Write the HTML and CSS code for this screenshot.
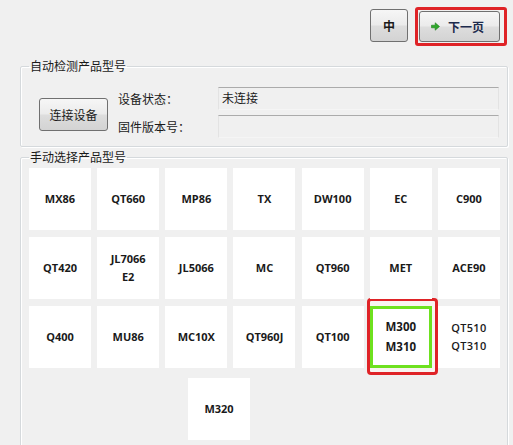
FILE: index.html
```html
<!DOCTYPE html>
<html lang="zh">
<head>
<meta charset="utf-8">
<title>产品型号选择</title>
<link rel="stylesheet" href="styles.css">
</head>
<body>
<div class="topbar">
  <button class="btn btn-lang">中</button>
  <div class="hl-frame">
    <button class="btn btn-next">
      <svg class="arrow" width="9" height="9" viewBox="0 0 9 9"><path d="M0.5 3.2 H4.2 V0.8 L8.5 4.5 L4.2 8.2 V5.8 H0.5 Z" fill="#2fa82a" stroke="#1d7f1d" stroke-width="0.6"/></svg>
      <span>下一页</span>
    </button>
  </div>
</div>

<fieldset class="group group-auto">
  <legend>自动检测产品型号</legend>
  <div class="auto-row">
    <button class="btn btn-connect">连接设备</button>
    <div class="fields">
      <span class="label">设备状态：</span>
      <div class="textbox">未连接</div>
      <span class="label">固件版本号：</span>
      <div class="textbox"></div>
    </div>
  </div>
</fieldset>

<fieldset class="group group-manual">
  <legend>手动选择产品型号</legend>
  <div class="tiles">
    <div class="tile">MX86</div>
    <div class="tile">QT660</div>
    <div class="tile">MP86</div>
    <div class="tile">TX</div>
    <div class="tile">DW100</div>
    <div class="tile">EC</div>
    <div class="tile">C900</div>
    <div class="tile">QT420</div>
    <div class="tile two">JL7066<br>E2</div>
    <div class="tile">JL5066</div>
    <div class="tile">MC</div>
    <div class="tile">QT960</div>
    <div class="tile">MET</div>
    <div class="tile">ACE90</div>
    <div class="tile">Q400</div>
    <div class="tile">MU86</div>
    <div class="tile">MC10X</div>
    <div class="tile">QT960J</div>
    <div class="tile">QT100</div>
    <div class="tile two selected">M300<br>M310</div>
    <div class="tile two light">QT510<br>QT310</div>
  </div>
  <div class="tiles-last">
    <div class="tile">M320</div>
  </div>
</fieldset>
</body>
</html>
```

FILE: styles.css
```css
html {
  overflow: hidden;
}
body {
  margin: 0;
  width: 513px;
  height: 445px;
  background: #f0f0f0;
  font-family: "Noto Sans CJK SC", "Noto Sans", sans-serif;
  font-size: 12px;
  color: #1a1a1a;
  overflow: hidden;
}

.topbar {
  display: flex;
  justify-content: flex-end;
  align-items: flex-start;
  padding: 7px 6px 0 0;
  height: 38px;
}

.btn {
  font-family: "Noto Sans CJK SC", sans-serif;
  background: linear-gradient(#f6f6f6 0%, #ebebeb 48%, #dddddd 52%, #d3d3d3 100%);
  border: 1px solid #707070;
  border-radius: 3px;
  color: #1a1a1a;
  padding: 0;
  margin: 0;
}

.btn-lang {
  width: 38px;
  height: 33px;
  margin-top: 2px;
  font-size: 12px;
  font-weight: bold;
}

.hl-frame {
  margin-left: 7px;
  border: 3px solid #df2327;
  border-radius: 3px;
  padding: 1px 4px 0 1px;
  height: 32px;
}

.btn-next {
  width: 81px;
  height: 31px;
  display: flex;
  align-items: center;
  justify-content: center;
  gap: 8px;
  padding-right: 4px;
  font-size: 12px;
  font-weight: bold;
  color: #1d2b4d;
}

.arrow {
  display: block;
}

.group {
  margin: 0 5px 0 20px;
  border: 1px solid #d5d9dc;
  box-shadow: inset 1px 1px 0 #ffffff, 1px 1px 0 #ffffff;
  border-radius: 2px;
  padding: 0 7px 0 8px;
}

.group legend {
  padding: 0 1px;
  margin-left: 0;
  font-size: 12px;
  line-height: 16px;
  color: #1a1a1a;
}

.group-auto {
  margin-top: 13px;
  padding-top: 13px;
  padding-bottom: 8px;
}

.auto-row {
  display: flex;
  align-items: flex-start;
}

.btn-connect {
  width: 69px;
  height: 33px;
  margin: 11px 0 0 10px;
  font-size: 12px;
}

.fields {
  margin-left: 10px;
  display: grid;
  grid-template-columns: 100px 281px;
  row-gap: 5px;
  align-items: center;
}

.label {
  font-size: 12px;
  line-height: 16px;
}

.textbox {
  height: 23px;
  box-sizing: border-box;
  border: 1px solid #e3e3e3;
  border-top-color: #ababab;
  border-bottom-color: #f5f5f5;
  background: #f0f0f0;
  padding: 2px 3px;
  font-size: 12px;
  line-height: 16px;
}

.group-manual {
  margin-top: 2px;
  padding-top: 3px;
  height: 300px;
}

.tiles {
  display: grid;
  grid-template-columns: repeat(7, 62px);
  grid-auto-rows: 62px;
  column-gap: 6.17px;
  row-gap: 7px;
}

.tile {
  position: relative;
  width: 62px;
  height: 62px;
  box-sizing: border-box;
  background: #ffffff;
  display: flex;
  align-items: center;
  justify-content: center;
  text-align: center;
  font-family: "Open Sans", "Noto Sans", sans-serif;
  font-weight: bold;
  font-size: 11px;
  line-height: 18px;
  color: #1a1a1a;
}

.tile.selected {
  border: 3px solid #6ee11f;
  line-height: 20px;
  font-size: 11.5px;
}

.tile.selected::before {
  content: "";
  position: absolute;
  left: -6px;
  top: -11px;
  right: -9px;
  bottom: -10px;
  border: 3px solid #df2327;
  border-radius: 4px;
  background: #f8f4f1;
  z-index: -1;
}

.tile.light {
  font-weight: 600;
  letter-spacing: 0.3px;
}

.tiles-last {
  display: flex;
  margin-top: 10px;
  padding-left: 159px;
}
```
